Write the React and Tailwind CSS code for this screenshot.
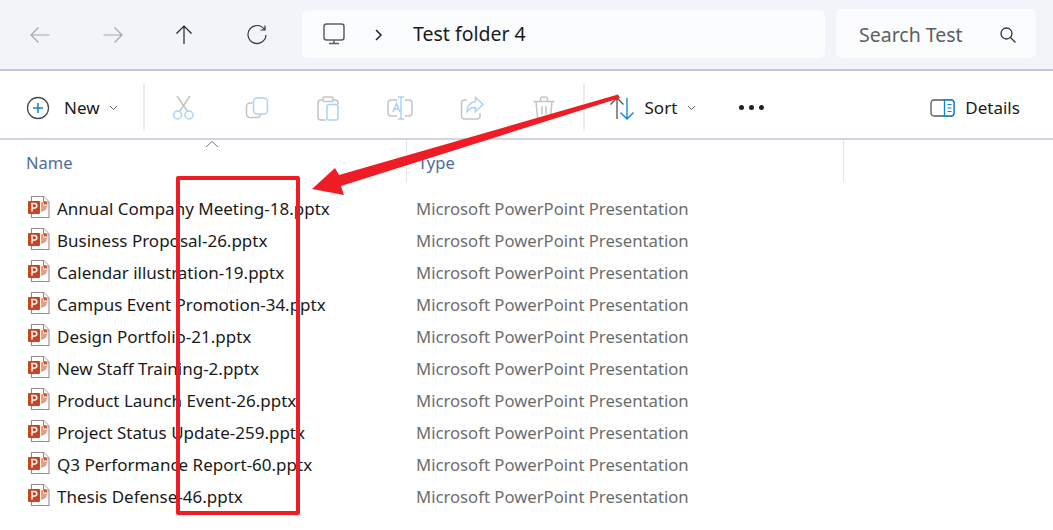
import React from 'react';

const files = [
  'Annual Company Meeting-18.pptx',
  'Business Proposal-26.pptx',
  'Calendar illustration-19.pptx',
  'Campus Event Promotion-34.pptx',
  'Design Portfolio-21.pptx',
  'New Staff Training-2.pptx',
  'Product Launch Event-26.pptx',
  'Project Status Update-259.pptx',
  'Q3 Performance Report-60.pptx',
  'Thesis Defense-46.pptx',
];

const Chevron = () => (
  <svg width="9" height="6" viewBox="0 0 9 6" fill="none" stroke="#666" strokeWidth="1">
    <path d="M1 1l3.5 3.5L8 1" />
  </svg>
);

const NavIcon = ({ d, color }) => (
  <svg width="22" height="22" viewBox="0 0 22 22" fill="none" stroke={color} strokeWidth="1.2">
    <path d={d} />
  </svg>
);

const PptIcon = () => (
  <svg width="24" height="24" viewBox="0 0 24 24" className="shrink-0 mb-[4px]">
    <path d="M4.5 1.500h12l5.500 5.500v15.500H4.500z" fill="#fff" stroke="#8f8f8f" strokeWidth="1.100" />
    <path d="M16.500 1.500v5.500H22" fill="#fff" stroke="#8f8f8f" strokeWidth="1.100" />
    <rect x="1" y="6" width="12" height="13" rx="1" fill="#c8451f" />
    <path d="M14 7h2.500v3.500H20a5.500 5.500 0 0 1-6 6z" fill="#ec9a7c" />
    <path d="M17 6a4 4 0 0 1 3.500 3.500H17z" fill="#d2502a" />
    <path d="M5 16.500V8.500h2.500a2.300 2.300 0 0 1 0 4.600H5" fill="none" stroke="#fff" strokeWidth="1.500" />
  </svg>
);

const ToolIcon = ({ children }) => (
  <svg width="26" height="26" viewBox="0 0 26 26" fill="none" strokeWidth="1.500">
    {children}
  </svg>
);

const gray = '#c4c4c4';
const blue = '#aad3f4';

export default function App() {
  return (
    <div className="relative w-[1053px] h-[530px] overflow-hidden bg-white text-[#1a1a1a] font-['Noto_Sans','Open_Sans',sans-serif]">
      {/* address bar */}
      <div className="h-[71px] bg-[#f2f4f9] border-b-[2px] border-[#c0c9d9] flex items-center">
        <div className="flex items-center w-[302px] pl-[29px]">
          <div className="w-[73px]"><NavIcon color="#a3a8ae" d="M20.500 11H2M9.500 3.500L2 11l7.500 7.500" /></div>
          <div className="w-[71px]"><NavIcon color="#a3a8ae" d="M1.500 11H20M12.500 3.500L20 11l-7.500 7.500" /></div>
          <div className="w-[73px]"><NavIcon color="#222" d="M11 20V2M3.500 9.500L11 2l7.500 7.500" /></div>
          <div><NavIcon color="#333" d="M18.500 5.500A9 9 0 1 0 20 11M19 1.500v4.500h-4.500" /></div>
        </div>
        <div className="w-[523px] h-[48px] bg-[#fbfcfe] rounded-md flex items-center mb-[1px]">
          <svg width="24" height="24" viewBox="0 0 24 24" fill="none" stroke="#5f5f5f" strokeWidth="1.500" className="ml-[20px]">
            <rect x="2" y="2" width="20" height="16" rx="2.500" />
            <path d="M12 18v3M7 21.500h10" />
          </svg>
          <svg width="10" height="14" viewBox="0 0 10 14" fill="none" stroke="#222" strokeWidth="1.500" className="ml-[28px] mt-[2px]">
            <path d="M2 2l5 5-5 5" />
          </svg>
          <span className="ml-[29px] text-[19.500px] leading-none">Test folder 4</span>
        </div>
        <div className="ml-[11px] w-[200px] h-[49px] bg-[#fbfcfe] rounded-md flex items-center mb-[2px]">
          <span className="ml-[23px] w-[104px] overflow-hidden whitespace-nowrap text-[19.500px] leading-none text-[#5e5e5e] mt-[2px]">Search Test folder</span>
          <svg width="18" height="18" viewBox="0 0 18 18" fill="none" stroke="#333" strokeWidth="1.300" className="ml-[36px] mt-[2px]">
            <circle cx="7.500" cy="7.500" r="5.500" />
            <path d="M11.500 11.500l5 5" />
          </svg>
        </div>
      </div>

      {/* command bar */}
      <div className="h-[69px] pt-[6px] border-b-[2px] border-[#d0d5df] flex items-center text-[17px]">
        <svg width="24" height="24" viewBox="0 0 24 24" fill="none" className="ml-[26px]">
          <circle cx="12" cy="12" r="10.500" stroke="#4d4d4d" strokeWidth="1.300" />
          <path d="M12 7v10M7 12h10" stroke="#0a7fdc" strokeWidth="1.500" />
        </svg>
        <span className="ml-[14px]">New</span>
        <span className="ml-[9px] flex"><Chevron /></span>
        <div className="ml-[25px] w-[2px] h-[47px] bg-[#ececec]" />
        <div className="flex items-center">
          <div className="w-[72px] ml-[2px] flex justify-center">
            <ToolIcon>
              <path d="M7 1l10.500 15.500M20 1L9.500 16.500" stroke={gray} />
              <circle cx="7.500" cy="20" r="4" stroke={blue} />
              <circle cx="19" cy="20" r="4" stroke={blue} />
            </ToolIcon>
          </div>
          <div className="w-[72px] ml-[2px] flex justify-center">
            <ToolIcon>
              <path d="M8.500 8H6a3.500 3.500 0 0 0-3.500 3.500V19A3.500 3.500 0 0 0 6 22.500h7a3.500 3.500 0 0 0 3.500-3" stroke={gray} />
              <rect x="9.500" y="3" width="14" height="16" rx="3.500" stroke={blue} />
            </ToolIcon>
          </div>
          <div className="w-[70px] flex justify-center">
            <ToolIcon>
              <path d="M8 5H6a3 3 0 0 0-3 3v14a3 3 0 0 0 3 3h5M18 5h2a3 3 0 0 1 3 3v1" stroke={gray} />
              <rect x="8" y="2" width="10" height="4.500" rx="1.500" stroke={gray} />
              <rect x="12" y="9.500" width="11" height="15.500" rx="2" stroke={blue} />
            </ToolIcon>
          </div>
          <div className="w-[74px] flex justify-center">
            <ToolIcon>
              <path d="M10 5H4a3 3 0 0 0-3 3v10a3 3 0 0 0 3 3h6M18 5h4a3 3 0 0 1 3 3v10a3 3 0 0 1-3 3h-4" stroke={gray} />
              <path d="M14 2v22M11 2h6M11 24h6M6 17l3.500-8.500L13 17M7 14h5" stroke={blue} />
            </ToolIcon>
          </div>
          <div className="w-[71px] flex justify-center">
            <ToolIcon>
              <path d="M8 5H5.500A3 3 0 0 0 2.500 8v13a3 3 0 0 0 3 3H18a3 3 0 0 0 3-3v-3" stroke={gray} />
              <path d="M16.500 2.500L24 9.500l-7.500 7v-4c-4 0-6.500 1-8.500 4 0-5 3-9 8.500-10z" stroke={blue} />
            </ToolIcon>
          </div>
          <div className="w-[73px] flex justify-center">
            <ToolIcon>
              <path d="M2.500 6.500h21M9.500 6V4a2 2 0 0 1 2-2h3a2 2 0 0 1 2 2v2M5 7l1.500 15a2.500 2.500 0 0 0 2.500 2h8a2.500 2.500 0 0 0 2.500-2L21 7M11 11v8.500M15 11v8.500" stroke={gray} />
            </ToolIcon>
          </div>
        </div>
        <div className="ml-[2px] w-[2px] h-[47px] bg-[#ececec]" />
        <svg width="26" height="26" viewBox="0 0 26 26" fill="none" strokeWidth="1.300" className="ml-[24px]">
          <path d="M8 24V3M1.500 9.500L8 3l6.500 6.500" stroke="#555" />
          <path d="M18 3v21M11.500 17.500L18 24l6.500-6.500" stroke="#0a7fdc" />
        </svg>
        <span className="ml-[10px]">Sort</span>
        <span className="ml-[10px] flex"><Chevron /></span>
        <div className="ml-[43px] flex gap-[5px]">
          <span className="w-[5px] h-[5px] rounded-full bg-[#222]" />
          <span className="w-[5px] h-[5px] rounded-full bg-[#222]" />
          <span className="w-[5px] h-[5px] rounded-full bg-[#222]" />
        </div>
        <svg width="25" height="20" viewBox="0 0 25 20" fill="none" className="ml-[166px]">
          <rect x="1" y="2" width="23" height="16" rx="3" stroke="#555" strokeWidth="1.300" />
          <path d="M14.500 2H21a3 3 0 0 1 3 3v10a3 3 0 0 1-3 3h-6.500z" fill="#fff" stroke="#0a7fdc" strokeWidth="1.300" />
          <path d="M17.500 6.500h4M17.500 10h4M17.500 13.500h4" stroke="#0a7fdc" strokeWidth="1.200" />
        </svg>
        <span className="ml-[10px]">Details</span>
      </div>

      {/* column header */}
      <div className="relative h-[42px] flex text-[16.500px] text-[#4f6b9c]">
        <div className="w-[407px] border-r border-[#e5e5e5] pl-[26px] pt-[11px]">Name</div>
        <div className="w-[437px] border-r border-[#e5e5e5] pl-[11px] pt-[11px]">Type</div>
        <svg width="14" height="8" viewBox="0 0 14 8" fill="none" stroke="#777" strokeWidth="1" className="absolute left-[205px] top-0">
          <path d="M1 7l6-5.500L13 7" />
        </svg>
      </div>

      {/* file rows */}
      <div className="pt-[11px]">
        {files.map((name) => (
          <div key={name} className="h-[32px] flex items-center">
            <div className="w-[416px] flex items-center pl-[27px] text-[17px] whitespace-nowrap">
              <PptIcon />
              <span className="ml-[6px]">{name}</span>
            </div>
            <span className="text-[16.700px] text-[#6d6d6d] whitespace-nowrap">Microsoft PowerPoint Presentation</span>
          </div>
        ))}
      </div>

      {/* red annotation */}
      <div className="absolute left-[176px] top-[176px] w-[124px] h-[339px] border-[4px] border-[#ee1c25] rounded-[2px]" />
      <svg width="1053" height="530" viewBox="0 0 1053 530" className="absolute left-0 top-0 pointer-events-none">
        <path d="M618 94.500L620 98L341 186L344 195L312 189L335 168L339 175z" fill="#ee1c25" />
      </svg>
    </div>
  );
}
